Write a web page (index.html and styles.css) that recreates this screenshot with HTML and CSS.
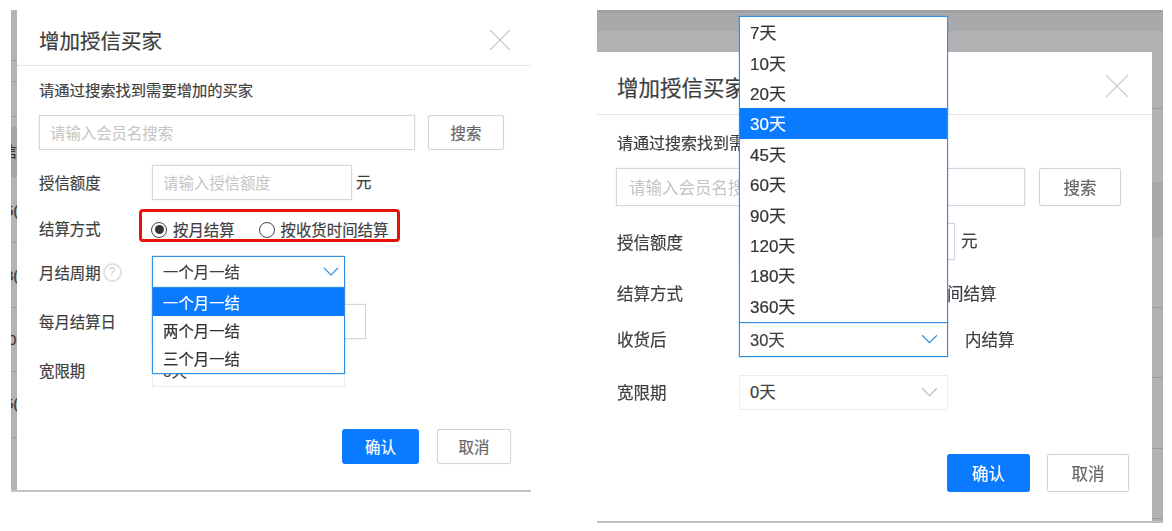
FILE: index.html
```html
<!DOCTYPE html>
<html lang="zh">
<head>
<meta charset="utf-8">
<title>增加授信买家</title>
<link rel="stylesheet" href="styles.css">
</head>
<body>
<main class="page">
  <section class="shot shot-a">
    <div class="strip strip-left">
      <span class="frag frag-1">信</span>
      <span class="frag frag-2">5(</span>
      <span class="frag frag-3">3(</span>
      <span class="frag frag-4">0</span>
      <span class="frag frag-5">5(</span>
    </div>
    <div class="dialog">
      <header class="head">
        <h2 class="title">增加授信买家</h2>
        <svg class="close" viewBox="0 0 22 22"><path d="M1 1 21 21M21 1 1 21"/></svg>
      </header>
      <p class="intro">请通过搜索找到需要增加的买家</p>
      <div class="row search-row">
        <div class="field grow ph">请输入会员名搜索</div>
        <div class="btn btn-plain btn-search">搜索</div>
      </div>
      <div class="row credit-row">
        <span class="label">授信额度</span>
        <div class="field credit ph">请输入授信额度</div>
        <span class="unit">元</span>
      </div>
      <div class="row radio-row">
        <span class="label">结算方式</span>
        <div class="radios">
          <span class="radio on"></span><span class="radio-text">按月结算</span>
          <span class="radio"></span><span class="radio-text">按收货时间结算</span>
        </div>
      </div>
      <div class="row cycle-row">
        <span class="label">月结周期<span class="help">?</span></span>
        <div class="select open">
          <span>一个月一结</span>
          <svg class="chev" viewBox="0 0 16 10"><path d="M1 1 8 8 15 1"/></svg>
          <ul class="menu menu-down">
            <li class="active">一个月一结</li>
            <li>两个月一结</li>
            <li>三个月一结</li>
          </ul>
        </div>
      </div>
      <div class="row day-row">
        <span class="label">每月结算日</span>
        <div class="field day"></div>
      </div>
      <div class="row grace-row">
        <span class="label">宽限期</span>
        <div class="select">
          <span>0天</span>
          <svg class="chev chev-idle" viewBox="0 0 16 10"><path d="M1 1 8 8 15 1"/></svg>
        </div>
      </div>
      <footer class="foot">
        <div class="btn btn-primary">确认</div>
        <div class="btn btn-plain">取消</div>
      </footer>
    </div>
  </section>

  <section class="shot shot-b">
    <div class="band"></div>
    <div class="stage">
      <div class="dialog">
        <header class="head">
          <h2 class="title">增加授信买家</h2>
          <svg class="close" viewBox="0 0 22 22"><path d="M1 1 21 21M21 1 1 21"/></svg>
        </header>
        <p class="intro">请通过搜索找到需要增加的买家</p>
        <div class="row search-row">
          <div class="field grow ph">请输入会员名搜索</div>
          <div class="btn btn-plain btn-search">搜索</div>
        </div>
        <div class="row credit-row">
          <span class="label">授信额度</span>
          <div class="field credit ph">请输入授信额度</div>
          <span class="unit">元</span>
        </div>
        <div class="row radio-row">
          <span class="label">结算方式</span>
          <div class="radios">
            <span class="radio on"></span><span class="radio-text">按月结算</span>
            <span class="radio"></span><span class="radio-text">按收货时间结算</span>
          </div>
        </div>
        <div class="row cycle-row">
          <span class="label">收货后</span>
          <div class="select open">
            <span>30天</span>
            <svg class="chev" viewBox="0 0 16 10"><path d="M1 1 8 8 15 1"/></svg>
            <ul class="menu menu-up">
              <li>7天</li>
              <li>10天</li>
              <li>20天</li>
              <li class="active">30天</li>
              <li>45天</li>
              <li>60天</li>
              <li>90天</li>
              <li>120天</li>
              <li>180天</li>
              <li>360天</li>
            </ul>
          </div>
          <span class="after">内结算</span>
        </div>
        <div class="row grace-row">
          <span class="label">宽限期</span>
          <div class="select">
            <span>0天</span>
            <svg class="chev chev-idle" viewBox="0 0 16 10"><path d="M1 1 8 8 15 1"/></svg>
          </div>
        </div>
        <footer class="foot">
          <div class="btn btn-primary">确认</div>
          <div class="btn btn-plain">取消</div>
        </footer>
      </div>
      <div class="strip strip-right"></div>
    </div>
  </section>
</main>
</body>
</html>
```
FILE: styles.css
```css
* { box-sizing: border-box; }
html, body { margin: 0; padding: 0; background: #fff; }
body {
  width: 1172px;
  height: 531px;
  overflow: hidden;
  font-family: "Liberation Sans", "Noto Sans CJK SC", sans-serif;
  color: #3f3f3f;
  -webkit-text-stroke: 0.2px currentColor;
}
.page { display: flex; align-items: flex-start; filter: blur(0.35px); }
.shot { position: relative; }
h2, p, ul { margin: 0; padding: 0; }
ul { list-style: none; }

/* left shot */
.shot-a {
  display: flex;
  width: 520px;
  height: 482px;
  margin: 10px 0 0 11px;
  border-bottom: 2px solid #c4c4c4;
  font-size: 15.4px;
}
.strip-left {
  position: relative;
  width: 6px;
  background: linear-gradient(
    #b4b4b4 0 50px, #9c9c9c 50px 51px,
    #b4b4b4 51px 71px, #9c9c9c 71px 72px,
    #b4b4b4 72px 106px, #9c9c9c 106px 107px,
    #b4b4b4 107px 117px, #a4a4a4 117px 167px,
    #b4b4b4 167px 232px, #9c9c9c 232px 233px,
    #b4b4b4 233px 297px, #9c9c9c 297px 298px,
    #b4b4b4 298px 361px, #9c9c9c 361px 362px,
    #b4b4b4 362px 427px, #9c9c9c 427px 428px,
    #b4b4b4 428px
  );
  overflow: hidden;
  flex: none;
}
.frag { position: absolute; font-size: 15px; line-height: 16px; color: #333; white-space: nowrap; }
.frag-1 { top: 134px; left: -9px; }
.frag-2 { top: 193px; left: -6px; }
.frag-3 { top: 258px; left: -6px; }
.frag-4 { top: 322px; left: -3px; }
.frag-5 { top: 386px; left: -6px; }

.dialog { flex: 1; background: #fff; }
.head { display: flex; align-items: center; justify-content: space-between; border-bottom: 1px solid #e6e6e6; }
.title { font-weight: 400; color: #3d3d3d; white-space: nowrap; }
.close { display: block; fill: none; stroke: #c8c8c8; stroke-width: 1.2; -webkit-text-stroke: 0; }
.row { display: flex; align-items: center; }
.label { flex: none; display: flex; align-items: center; white-space: nowrap; padding-bottom: 2px; }
.field { border: 1px solid #d6d6d6; color: #c4c4c4; display: flex; align-items: center; flex: none; box-shadow: 0 0 1px #d6d6d6; -webkit-text-stroke: 0; }
.grow { flex: 1; }
.btn { display: flex; align-items: center; justify-content: center; border-radius: 3px; flex: none; }
.btn-plain { border: 1px solid #d4d4d4; color: #666; background: #fff; box-shadow: 0 0 1px #d4d4d4; }
.btn-primary { background: #0a7aff; color: #fff; }
.radios { display: flex; align-items: center; white-space: nowrap; }
.radio { width: 16px; height: 16px; margin-top: 2px; flex: none; border: 1px solid #444; border-radius: 50%; display: flex; align-items: center; justify-content: center; }
.radio.on::after { content: ""; width: 9px; height: 9px; border-radius: 50%; background: #333; }
.select { position: relative; display: flex; align-items: center; justify-content: space-between; border: 1px solid #ececec; flex: none; background: #fff; }
.select > span { padding-bottom: 2px; }
.select.open { border-color: #2f8fe0; box-shadow: 0 0 1px #2f8fe0; z-index: 2; }
.chev { display: block; fill: none; stroke: #2f8fe0; stroke-width: 1.1; }
.chev-idle { stroke: #bdbdbd; }
.menu { position: absolute; background: #fff; border: 1px solid #2f8fe0; box-shadow: 0 0 1px #2f8fe0; color: #333; }
.menu li { display: flex; align-items: center; }
.menu .active { background: #0a7aff; color: #fff; }
.foot { display: flex; justify-content: flex-end; }

/* left metrics */
.shot-a .head { height: 56px; padding: 4px 20px 0 22px; }
.shot-a .title { font-size: 20.5px; }
.shot-a .close { width: 22px; height: 22px; }
.shot-a .intro { margin: 15px 0 0 22px; font-size: 15.3px; line-height: 20px; }
.shot-a .row { margin-left: 22px; margin-right: 27px; }
.shot-a .label { width: 113px; }
.shot-a .search-row { margin-top: 14px; height: 35px; gap: 13px; }
.shot-a .field { padding: 0 0 2px 10px; height: 35px; }
.shot-a .btn { padding-bottom: 2px; }
.shot-a .btn-search { width: 76px; height: 35px; }
.shot-a .credit-row { margin-top: 15px; height: 35px; }
.shot-a .credit { width: 200px; }
.shot-a .unit { margin: -4px 0 0 4px; }
.shot-a .radio-row { margin-top: 9px; height: 33px; align-items: flex-start; }
.shot-a .radio-row .label { margin-top: 9px; height: 20px; padding-bottom: 0; }
.shot-a .radios { margin-left: -13px; width: 261px; height: 33px; padding: 6px 0 0 9px; border: 3px solid #e8120c; border-radius: 4px; }
.shot-a .radio-text { margin-left: 6px; }
.shot-a .radio + .radio-text + .radio { margin-left: 24px; }
.shot-a .cycle-row { margin-top: 14px; height: 32px; }
.shot-a .cycle-row .label { padding-bottom: 0; }
.shot-a .help { display: inline-flex; align-items: center; justify-content: center; width: 19px; height: 19px; margin-left: 2px; border: 2px solid #e2e2e2; border-radius: 50%; font-size: 12px; color: #ccc; -webkit-text-stroke: 0; }
.shot-a .select { width: 193px; height: 32px; padding: 0 5px 0 10px; }
.shot-a .cycle-row .select { padding-right: 5px; }
.shot-a .chev { width: 16px; height: 10px; }
.shot-a .menu-down { top: 100%; left: -1px; right: -1px; height: 87px; }
.shot-a .menu li { height: 28px; padding-left: 10px; }
.shot-a .day-row { margin-top: 16px; height: 35px; }
.shot-a .day { width: 214px; }
.shot-a .grace-row { margin-top: 16px; height: 32px; }
.shot-a .foot { margin: 42px 20px 0 0; gap: 18px; }
.shot-a .foot .btn { width: 77px; height: 35px; }
.shot-a .foot .btn-plain { width: 74px; }

/* right shot */
.shot-b {
  width: 566px;
  height: 513px;
  margin: 10px 0 0 66px;
  font-size: 16.5px;
  border-bottom: 2px solid #bdbdbd;
  display: flex;
  flex-direction: column;
}
.band { height: 42px; background: linear-gradient(#a0a0a2 0 3px, #a8a9ab 3px 21px, #b2b2b2 21px); flex: none; }
.stage { display: flex; flex: 1; min-height: 0; }
.strip-right {
  width: 11px;
  flex: none;
  background: linear-gradient(
    #b2b2b2 0 56px, #9a9a9a 56px 57px,
    #b2b2b2 57px 130px, #a8a8a8 130px 185px,
    #b2b2b2 185px 255px, #9a9a9a 255px 256px,
    #b2b2b2 256px 325px, #9a9a9a 325px 326px,
    #b2b2b2 326px 396px, #9a9a9a 396px 397px,
    #b2b2b2 397px 466px, #9a9a9a 466px 467px,
    #b2b2b2 467px
  );
}
.shot-b .head { height: 63px; padding: 6px 23px 0 20px; }
.shot-b .title { font-size: 21.5px; }
.shot-b .close { width: 24px; height: 24px; }
.shot-b .intro { margin: 18px 0 0 20px; font-size: 16px; line-height: 22px; }
.shot-b .row { margin-left: 19px; margin-right: 31px; }
.shot-b .label { width: 123px; padding: 0 0 0 1px; }
.shot-b .search-row { margin-top: 13px; height: 38px; gap: 14px; }
.shot-b .field { height: 100%; padding-left: 12px; }
.shot-b .btn-search { width: 82px; height: 38px; }
.shot-b .credit-row { margin-top: 17px; height: 37px; }
.shot-b .credit { width: 216px; }
.shot-b .unit { margin: -4px 0 0 6px; }
.shot-b .radio-row { margin-top: 15px; height: 36px; }
.shot-b .radio-text { margin-left: 6px; }
.shot-b .radio + .radio-text + .radio { margin-left: 32px; }
.shot-b .cycle-row { margin-top: 11px; height: 35px; }
.shot-b .cycle-row .label { padding-bottom: 2px; }
.shot-b .select { width: 209px; height: 35px; padding: 0 9px 0 10px; }
.shot-b .chev { width: 17px; height: 11px; }
.shot-b .after { margin-left: 17px; padding-bottom: 2px; }
.shot-b .menu-up { bottom: 100%; left: -1px; right: -1px; height: 307px; font-size: 17px; }
.shot-b .menu li { height: 30.4px; padding: 0 0 1px 10px; }
.shot-b .grace-row { margin-top: 18px; height: 34px; }
.shot-b .foot { margin: 45px 23px 0 0; gap: 17px; }
.shot-b .foot .btn { width: 83px; height: 38px; }
.shot-b .foot .btn-plain { width: 82px; }
```
